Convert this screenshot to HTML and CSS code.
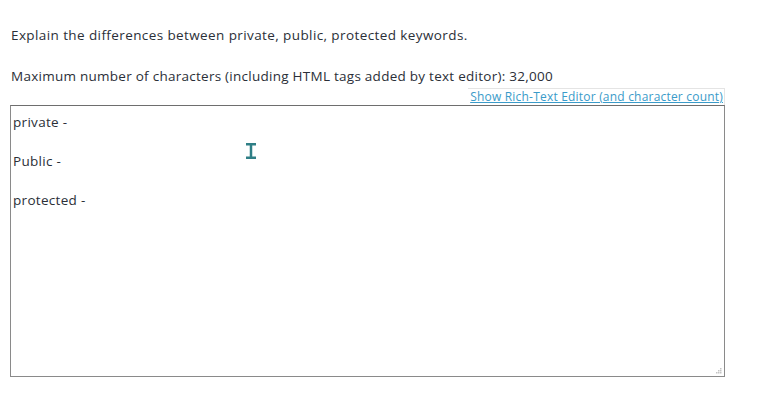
FILE: index.html
```html
<!DOCTYPE html>
<html lang="en">
<head>
<meta charset="utf-8">
<title>Question</title>
<link rel="stylesheet" href="styles.css">
</head>
<body>
<div class="question">
  <p class="prompt">Explain the differences between private, public, protected keywords.</p>
  <p class="limit">Maximum number of characters (including HTML tags added by text editor): 32,000</p>
  <div class="editor">
    <div class="toolbar"><a class="toggle" href="#">Show Rich-Text Editor (and character count)</a></div>
    <div class="answer">
      <p>private -</p>
      <p>Public -</p>
      <p>protected -</p>
      <svg class="ibeam" width="12" height="16" viewBox="0 0 12 16" aria-hidden="true">
        <path d="M1 1.2h10M1 14.8h10M6 1.2v13.6" stroke="#2f7f86" stroke-width="2.5" fill="none"/>
      </svg>
      <svg class="grip" width="8" height="8" viewBox="0 0 8 8" aria-hidden="true">
        <rect x="6" y="2" width="1.5" height="1.5" fill="#c4c4c4"/>
        <rect x="4" y="4" width="1.5" height="1.5" fill="#c4c4c4"/>
        <rect x="6" y="4" width="1.5" height="1.5" fill="#c4c4c4"/>
        <rect x="2" y="6" width="1.5" height="1.5" fill="#c4c4c4"/>
        <rect x="4" y="6" width="1.5" height="1.5" fill="#c4c4c4"/>
        <rect x="6" y="6" width="1.5" height="1.5" fill="#c4c4c4"/>
      </svg>
    </div>
  </div>
</div>
</body>
</html>
```
FILE: styles.css
```css
html, body {
  margin: 0;
  padding: 0;
  background: #ffffff;
}
body {
  font-family: "Open Sans", "Liberation Sans", Arial, sans-serif;
  color: #2b2f38;
  font-size: 13.5px;
  letter-spacing: 0.4px;
}
.question {
  padding: 27px 0 0 11px;
  width: 714px;
}
.prompt {
  margin: 0;
  line-height: 17px;
}
.limit {
  margin: 24px 0 0 0;
  line-height: 17px;
  letter-spacing: 0.26px;
}
.editor {
  margin-left: -1px;
}
.toolbar {
  display: flex;
  justify-content: flex-end;
  margin-top: 3px;
}
.toggle {
  font-size: 12px;
  letter-spacing: 0.2px;
  line-height: 14px;
  color: #3a9bc9;
  text-decoration: underline;
  border-top: 1px solid #e4e4e4;
  border-right: 1px solid #e4e4e4;
  padding: 1px 1px 1px 2px;
}
.answer {
  position: relative;
  box-sizing: border-box;
  height: 272px;
  border: 1px solid #8a8a8a;
  border-top-color: #6e6e6e;
  padding: 6px 2px;
}
.answer p {
  margin: 0 0 19px 0;
  line-height: 20px;
  letter-spacing: 0.3px;
}
.ibeam {
  position: absolute;
  left: 234px;
  top: 37px;
}
.grip {
  position: absolute;
  right: 2px;
  bottom: 2px;
}
```
